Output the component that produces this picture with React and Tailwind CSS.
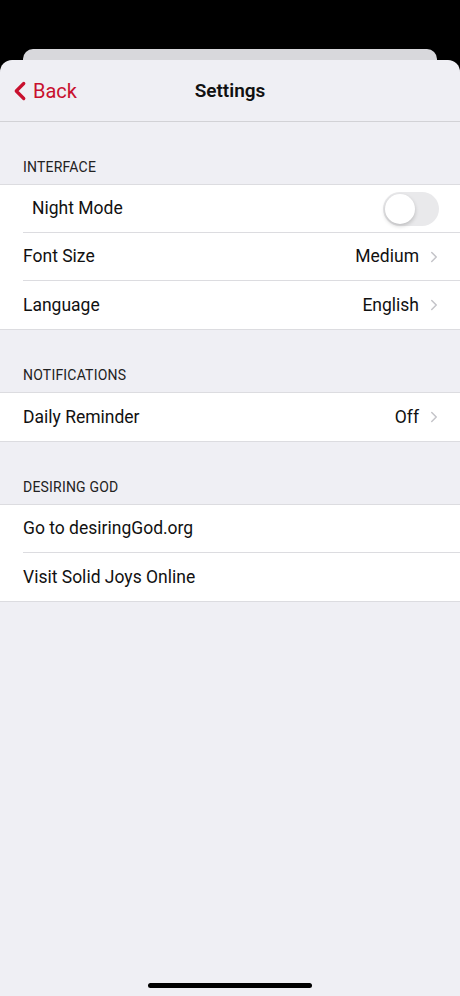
import { ChevronLeft, ChevronRight } from "lucide-react";

const font = { fontFamily: "Roboto, 'Noto Sans', sans-serif" };

function Row({ label, value, chevron, indent, last, children }) {
  return (
    <div className="flex h-[48px] items-stretch bg-white pl-[23px]">
      <div className={`flex flex-1 items-center pr-[22px] ${last ? "" : "border-b border-[#dcdce0]"}`}>
        <span className={`text-[17.5px] text-[#111] ${indent ? "pl-[9px]" : ""}`}>{label}</span>
        <div className="ml-auto flex items-center">
          {value && <span className="text-[17.5px] text-[#111]">{value}</span>}
          {chevron && <ChevronRight size={18} strokeWidth={2} className="ml-[6px] mr-[-5px] text-[#c4c4c9]" />}
          {children}
        </div>
      </div>
    </div>
  );
}

function Section({ title, children }) {
  return (
    <div>
      <div className="flex h-[62px] items-end px-[23px] pb-[6px]">
        <span className="text-[14px] text-[#222] tracking-[0.2px]">{title}</span>
      </div>
      <div className="border-y border-[#dcdce0]">{children}</div>
    </div>
  );
}

export default function App() {
  return (
    <div className="flex h-[996px] w-[460px] flex-col bg-black" style={font}>
      <div className="h-[49px]" />
      <div className="mx-[23px] h-[14px] rounded-t-[10px] bg-[#d8d8dc]" />
      <div className="-mt-[3px] flex flex-1 flex-col rounded-t-[12px] bg-[#efeff4]">
        <div className="relative flex h-[62px] items-center justify-center border-b border-[#d2d2d6] pt-[2px]">
          <div className="absolute left-[5px] top-[16px] flex items-center text-[#c8102e]">
            <ChevronLeft size={30} strokeWidth={2.6} />
            <span className="text-[20px] -ml-[2px]">Back</span>
          </div>
          <span className="text-[19px] font-semibold text-[#111]">Settings</span>
        </div>
        <Section title="INTERFACE">
          <Row label="Night Mode" indent>
            <div className="flex h-[34px] w-[56px] items-center rounded-full bg-[#e9e9eb] p-[2px] mr-[-1px]">
              <div className="h-[30px] w-[30px] rounded-full bg-white shadow-[0_2px_4px_rgba(0,0,0,0.2)]" />
            </div>
          </Row>
          <Row label="Font Size" value="Medium" chevron />
          <Row label="Language" value="English" chevron last />
        </Section>
        <Section title="NOTIFICATIONS">
          <Row label="Daily Reminder" value="Off" chevron last />
        </Section>
        <Section title="DESIRING GOD">
          <Row label="Go to desiringGod.org" />
          <Row label="Visit Solid Joys Online" last />
        </Section>
        <div className="mt-auto flex justify-center pb-[8px]">
          <div className="h-[5px] w-[164px] rounded-full bg-black" />
        </div>
      </div>
    </div>
  );
}
